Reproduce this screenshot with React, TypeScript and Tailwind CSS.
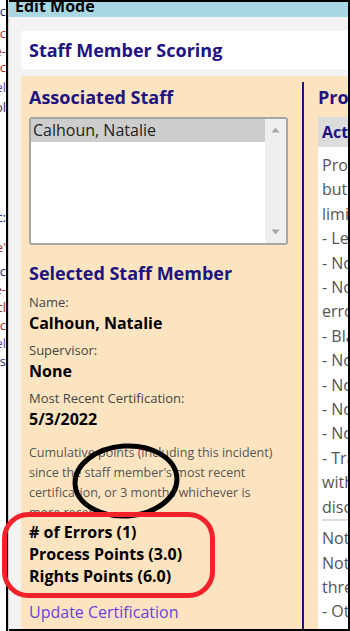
import React from 'react';

const FONT = { fontFamily: '"Open Sans", "Noto Sans", Arial, sans-serif' };

// bits of the page behind the dialog, cut off at the left edge
const BEHIND = [
  { h: 22, t: 'c', c: 'text-[#1d2a6b]' },
  { h: 18, t: 'ic', c: 'text-[#b0302a]' },
  { h: 16, t: 'e-', c: 'text-[#b0302a]' },
  { h: 20, t: 'ec', c: 'text-[#b0302a]' },
  { h: 20, t: 'el', c: 'text-[#6b3fc0]' },
  { h: 40, t: 'ol', c: 'text-[#333]' },
  { h: 70, t: '', c: '' },
  { h: 30, t: 'c:', c: 'text-[#1d2a6b]' },
  { h: 24, t: "e'", c: 'text-[#b0302a]' },
  { h: 18, t: 'c', c: 'text-[#1d2a6b]' },
  { h: 18, t: 'e-', c: 'text-[#b0302a]' },
  { h: 18, t: 'cl', c: 'text-[#b0302a]' },
  { h: 18, t: 'ec', c: 'text-[#b0302a]' },
  { h: 18, t: 'el', c: 'text-[#6b3fc0]' },
  { h: 40, t: 's', c: 'text-[#1d2a6b]' },
];

const PROC_LINES = [
  'Process errors are mistakes in procedure',
  'but not in rights, including but not',
  'limited to:',
  '- Lesson plan not followed',
  '- Not following the written plan',
  '- Not recording data or making',
  'errors on data sheets',
  '- Blank fields on forms',
  '- Not signing documents',
  '- Not notifying supervisor',
  '- Not following schedule',
  '- Not reporting incidents',
  '- Training not completed',
  'within the required time',
  'discussed with supervisor',
];

const NOTE_LINES = [
  'Note: points reset after',
  'Not counted toward the',
  'threshold:',
  '- Other errors',
];

export default function App() {
  return (
    <div className="relative w-[350px] h-[631px] overflow-hidden bg-white flex" style={FONT}>
      {/* page behind */}
      <div className="w-[6px] shrink-0 overflow-hidden flex flex-col pt-[4px] text-[13px] leading-[14px]">
        {BEHIND.map((b, i) => (
          <div key={i} className={`flex justify-end whitespace-nowrap ${b.c}`} style={{ height: b.h }}>
            {b.t}
          </div>
        ))}
      </div>
      <div className="w-[2px] shrink-0 bg-black" />
      <div className="w-[1px] shrink-0 bg-[#cfcfcf]" />

      {/* dialog */}
      <div className="flex-1 min-w-0 flex flex-col bg-[#f3f3f3] border-t-2 border-b-2 border-black">
        <div className="h-[15px] shrink-0 bg-[#a9d7e4] overflow-hidden pl-[6px]">
          <div className="text-[16px] leading-[16px] font-bold text-black -mt-[4px]">Edit Mode</div>
        </div>

        <div className="flex-1 min-h-0 flex flex-col pl-[12px] pt-[14px]">
          <div className="h-[38px] shrink-0 bg-white flex items-center pl-[8px]">
            <h1 className="text-[18px] font-bold text-[#20137f] whitespace-nowrap">Staff Member Scoring</h1>
          </div>

          <div className="mt-[7px] flex-1 min-h-0 bg-[#fde4c0] flex overflow-hidden">
            {/* left column */}
            <div className="w-[267px] shrink-0 pl-[8px] pt-[9px] flex flex-col">
              <h2 className="text-[18px] leading-[24px] font-bold text-[#20137f]">Associated Staff</h2>
              <div className="mt-[8px] w-[259px] h-[128px] border-2 border-[#a6a6a6] rounded-[3px] bg-white flex overflow-hidden">
                <div className="flex-1">
                  <div className="h-[23px] bg-[#cdcdcd] pl-[2px] text-[16px] leading-[23px] text-[#222]">Calhoun, Natalie</div>
                </div>
                <div className="w-[21px] bg-[#efefef] flex flex-col items-center justify-between py-[8px]">
                  <svg width="9" height="6" viewBox="0 0 9 6"><path d="M4.5 0.5 L8.5 5.5 L0.5 5.5 Z" fill="#a6a6a6" /></svg>
                  <svg width="9" height="6" viewBox="0 0 9 6"><path d="M0.5 0.5 L8.5 0.5 L4.5 5.5 Z" fill="#a6a6a6" /></svg>
                </div>
              </div>

              <h2 className="mt-[16px] text-[18px] leading-[24px] font-bold text-[#20137f] whitespace-nowrap">Selected Staff Member</h2>

              <div className="mt-[7px] flex flex-col gap-[6px]">
                <div>
                  <div className="text-[13px] leading-[20px] text-[#444]">Name:</div>
                  <div className="text-[16px] leading-[22px] font-bold text-black">Calhoun, Natalie</div>
                </div>
                <div>
                  <div className="text-[13px] leading-[20px] text-[#444]">Supervisor:</div>
                  <div className="text-[16px] leading-[22px] font-bold text-black">None</div>
                </div>
                <div>
                  <div className="text-[13px] leading-[20px] text-[#444]">Most Recent Certification:</div>
                  <div className="text-[16px] leading-[22px] font-bold text-black">5/3/2022</div>
                </div>
              </div>

              <div className="mt-[13px] h-[70px] overflow-hidden text-[12.5px] leading-[20px] text-[#555] whitespace-nowrap">
                Cumulative points (including this incident)
                <br />
                since the staff member's most recent
                <br />
                certification, or 3 months whichever is
                <br />
                more recent.
              </div>

              <div className="mt-[8px] text-[16px] leading-[22px] font-bold text-black">
                <div># of Errors (1)</div>
                <div>Process Points (3.0)</div>
                <div>Rights Points (6.0)</div>
              </div>

              <div className="mt-[14px] text-[16px] leading-[22px] text-[#6b3fe0]">Update Certification</div>
            </div>

            {/* divider */}
            <div className="w-[14px] shrink-0" />
            <div className="w-[2px] shrink-0 bg-[#20108a] mt-[6px]" />
            <div className="w-[14px] shrink-0" />

            {/* right column */}
            <div className="flex-1 min-w-0 pt-[9px] flex flex-col">
              <h2 className="text-[18px] leading-[24px] font-bold text-[#20137f] whitespace-nowrap">Process Points</h2>
              <div className="mt-[8px] h-[30px] bg-[#dcdcdc] pl-[4px] text-[16px] leading-[30px] font-bold text-[#20137f] whitespace-nowrap">
                Action Types
              </div>
              <div className="flex-1 bg-white pl-[4px] text-[16px] leading-[24.4px] text-[#555] whitespace-nowrap">
                <div className="pt-[6px] border-b-2 border-[#dddddd]">
                  {PROC_LINES.map((l, i) => (
                    <div key={i}>{l}</div>
                  ))}
                </div>
                <div className="pt-[5px]">
                  {NOTE_LINES.map((l, i) => (
                    <div key={i}>{l}</div>
                  ))}
                </div>
              </div>
            </div>
          </div>
        </div>
      </div>
      <div className="w-[2px] shrink-0 bg-black" />

      {/* hand-drawn annotations */}
      <svg className="absolute inset-0 pointer-events-none" width="350" height="631" viewBox="0 0 350 631">
        <ellipse cx="126" cy="481" rx="51" ry="35" fill="none" stroke="#000" strokeWidth="5" transform="rotate(-4 126 481)" />
        <rect x="4.5" y="514.5" width="208" height="81" rx="24" ry="24" fill="none" stroke="#f2222b" strokeWidth="5" />
      </svg>
    </div>
  );
}
